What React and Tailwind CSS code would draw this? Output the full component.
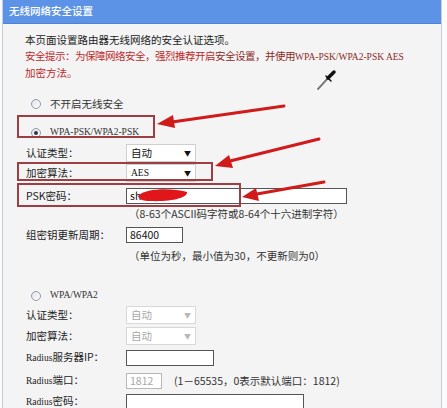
import React from 'react';

const FONT = { fontFamily: '"Noto Sans CJK SC", "Liberation Sans", sans-serif' };
const SERIF = { fontFamily: '"Liberation Serif", "Noto Sans CJK SC", serif' };

function Radio({ checked = false }) {
  return (
    <span className="flex h-[10px] w-[10px] items-center justify-center rounded-full border border-[#8c9bb0] bg-gradient-to-br from-[#e4e4e4] to-white">
      {checked && <span className="h-[4px] w-[4px] rounded-full bg-[#2a3a50]" />}
    </span>
  );
}

function Select({ value, disabled = false, width = 'w-[70px]' }) {
  return (
    <div
      className={`flex h-[18px] ${width} items-center justify-between border bg-white pl-[4px] pr-[4px] ${
        disabled ? 'border-[#d8d8d8] text-[#a8a8a8]' : 'border-[#cfcfcf] text-[#111]'
      }`}
    >
      <span>{value}</span>
      <span className={`text-[7px] ${disabled ? 'text-[#b8b8b8]' : 'text-[#111]'}`}>▼</span>
    </div>
  );
}

function Input({ value = '', width, disabled = false }) {
  return (
    <div
      className={`flex h-[16px] ${width} items-center border bg-white pl-[3px] ${
        disabled ? 'border-[#b8b8b8] text-[#a8a8a8]' : 'border-[#555] text-[#111]'
      }`}
    >
      {value}
    </div>
  );
}

function Row({ label, children, className = '' }) {
  return (
    <div className={`flex items-center ${className}`}>
      <span className="w-[100px] shrink-0 text-[#222]">{label}</span>
      {children}
    </div>
  );
}

function Radius() {
  return (
    <span className="text-[9.5px]" style={SERIF}>
      Radius
    </span>
  );
}

export default function App() {
  return (
    <div className="relative h-[408px] w-[447px] overflow-hidden bg-[#fbfbfb]" style={FONT}>
      <div className="ml-[2px] h-full w-[440px] border-l border-r border-[#c5cedb] bg-[#f4f4f4] text-[10.5px] leading-none">
        <div className="flex h-[24px] items-center border-b border-[#4f84d4] bg-[#5c93e6] pl-[6px] text-[10.5px] font-medium text-white">
          无线网络安全设置
        </div>

        <div className="pl-[22px] pt-[8px]">
          <div className="leading-[16px] text-[#222]">
            <p>本页面设置路由器无线网络的安全认证选项。</p>
            <p className="tracking-[-0.5px]">
              <span className="text-[#c0282a]">安全提示：为保障网络安全，强烈推荐开启</span>
              <span className="text-[#8c2a26]">
                安全设置，并使用<span className="text-[9.5px] tracking-normal" style={SERIF}>WPA-PSK/WPA2-PSK AES</span>
              </span>
            </p>
            <p className="text-[#c0282a]">加密方法。</p>
          </div>

          <div className="mt-[15px] flex h-[16px] items-center gap-[9px] pl-[6px] text-[#333]">
            <Radio />
            <span>不开启无线安全</span>
          </div>

          <div className="mt-[13px] flex h-[16px] items-center gap-[9px] pl-[6px] text-[#333]">
            <Radio checked />
            <span className="text-[9.5px]" style={SERIF}>WPA-PSK/WPA2-PSK</span>
          </div>

          <Row label="认证类型：" className="mt-[2px] h-[20px] pl-[1px]">
            <Select value="自动" />
          </Row>
          <Row label="加密算法：" className="h-[20px] pl-[1px]">
            <Select value={<span className="text-[9.5px]" style={SERIF}>AES</span>} />
          </Row>
          <Row label="PSK密码：" className="mt-[3px] h-[20px] pl-[1px]">
            <Input value="sh" width="w-[221px]" />
          </Row>
          <div className="flex h-[16px] items-center pl-[104px] text-[#333]">
            （8-63个ASCII码字符或8-64个十六进制字符）
          </div>
          <Row label="组密钥更新周期：" className="mt-[4px] h-[18px] pl-[1px]">
            <Input value="86400" width="w-[57px]" />
          </Row>
          <div className="mt-[4px] flex h-[16px] items-center pl-[104px] text-[#333]">
            （单位为秒，最小值为30，不更新则为0）
          </div>

          <div className="mt-[24px] flex h-[16px] items-center gap-[9px] pl-[6px] text-[#333]">
            <Radio />
            <span className="text-[9.5px]" style={SERIF}>WPA/WPA2</span>
          </div>
          <Row label="认证类型：" className="mt-[2px] h-[18px] pl-[1px]">
            <Select value="自动" disabled />
          </Row>
          <Row label="加密算法：" className="mt-[3px] h-[18px] pl-[1px]">
            <Select value="自动" disabled />
          </Row>
          <Row label={<><Radius />服务器IP：</>} className="mt-[4px] h-[18px] pl-[1px]">
            <Input width="w-[88px]" />
          </Row>
          <Row label={<><Radius />端口：</>} className="mt-[5px] h-[18px] pl-[1px]">
            <Input value="1812" width="w-[36px]" disabled />
            <span className="ml-[12px] text-[#333]">(1－65535，0表示默认端口：1812)</span>
          </Row>
          <Row label={<><Radius />密码：</>} className="mt-[3px] h-[18px] pl-[1px]">
            <Input width="w-[178px]" />
          </Row>
        </div>
      </div>

      {/* annotation boxes drawn over the page */}
      <div className="absolute left-[17px] top-[115px] h-[23px] w-[138px] border-2 border-[#9c3f44]" />
      <div className="absolute left-[17px] top-[162px] h-[19px] w-[196px] border-2 border-[#9c3f44]" />
      <div className="absolute left-[17px] top-[183px] h-[24px] w-[224px] border-2 border-[#9c3f44]" />

      <svg className="pointer-events-none absolute left-0 top-0" width="447" height="408" viewBox="0 0 447 408">
        {/* scribble over the password */}
        <path d="M138 196 C146 188, 172 188, 187 192 C188 198, 170 202, 150 201 C144 201, 139 200, 138 196 Z" fill="#e0161a" />
        <g stroke="#d11a1a" strokeWidth="3" strokeLinecap="round" fill="#d11a1a">
          <line x1="284" y1="106" x2="172" y2="122" />
          <polygon points="157,124 173,115 175,128" stroke="none" />
          <line x1="319" y1="139" x2="230" y2="161" />
          <polygon points="215,166 229,155 233,168" stroke="none" />
          <line x1="324" y1="182" x2="257" y2="194" />
          <polygon points="242,197 256,188 259,201" stroke="none" />
        </g>
        {/* eyedropper cursor */}
        <g strokeLinecap="round">
          <line x1="318" y1="89" x2="329" y2="77" stroke="#ffffff" strokeWidth="4" />
          <line x1="318" y1="89" x2="329" y2="77" stroke="#7a7a7a" strokeWidth="2" />
          <line x1="328" y1="78" x2="334" y2="72" stroke="#111" strokeWidth="3.5" />
          <line x1="326" y1="76" x2="331" y2="81" stroke="#111" strokeWidth="1.5" />
        </g>
      </svg>
    </div>
  );
}
